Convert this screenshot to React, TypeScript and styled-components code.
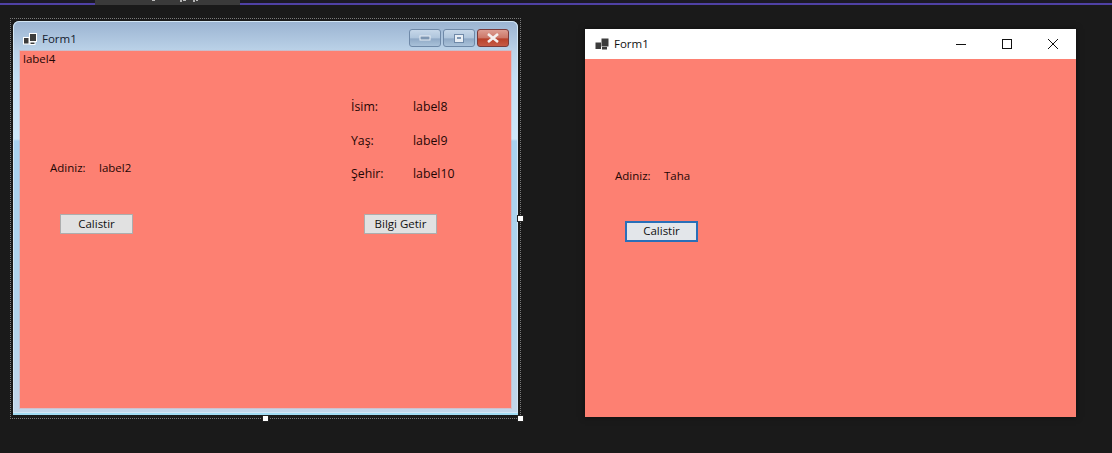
import React from 'react';
import styled, {createGlobalStyle} from 'styled-components';

const GlobalStyle = createGlobalStyle`
  html, body {
    margin: 0;
    padding: 0;
    background: #1a1a1a;
    overflow: hidden;
  }
`

const FormIcon = ({dark}: {dark?: boolean}) => {
    const edge = dark ? 'none' : '#fff';
    return (
        <svg width="14" height="12" viewBox="0 0 14 12">
            <rect x="0.5" y="4.5" width="5.5" height="6.5" fill="#3c3c3c" stroke={edge}/>
            <rect x="6.5" y="0.5" width="7" height="8" fill="#3c3c3c" stroke={edge}/>
            <rect x="7" y="9" width="5" height="2.5" fill="#3c3c3c" stroke={edge}/>
        </svg>
    );
};

const App = () => {
    return (
        <Desktop>
            <GlobalStyle/>
            <TopBar>
                <TopTab>
                    <svg width="145" height="2" viewBox="0 0 145 2">
                        <path d="M57 0 H60 M86 0 V2 M88 0 H91 M99 0 V2 M101 0 H103" stroke="#e8e8e8" strokeWidth="1.4"/>
                    </svg>
                </TopTab>
            </TopBar>

            <Windows>
                <SelectionFrame>
                    <AeroWindow>
                        <AeroTitle>
                            <FormIcon/>
                            <TitleText>Form1</TitleText>
                            <AeroButtons>
                                <AeroButton>
                                    <svg width="12" height="6" viewBox="0 0 12 6">
                                        <rect x="1" y="1" width="10" height="4" fill="#7f97b3" stroke="#e8eef5"/>
                                    </svg>
                                </AeroButton>
                                <AeroButton>
                                    <svg width="10" height="9" viewBox="0 0 10 9">
                                        <rect x="0.5" y="0.5" width="9" height="8" fill="#e8eef5" stroke="#6f89a8"/>
                                        <rect x="3" y="3" width="4" height="2" fill="#7f97b3"/>
                                    </svg>
                                </AeroButton>
                                <AeroClose>
                                    <svg width="14" height="10" viewBox="0 0 14 10">
                                        <path d="M2 1 L12 9 M12 1 L2 9" stroke="#f4efee" strokeWidth="2.6"/>
                                    </svg>
                                </AeroClose>
                            </AeroButtons>
                        </AeroTitle>
                        <DesignerBody>
                            <LeftPane>
                                <Label>label4</Label>
                                <NameBlock $inset={27} $top={93} $gap={38}>
                                    <NameRow>
                                        <NameCaption>Adiniz:</NameCaption>
                                        <Label>label2</Label>
                                    </NameRow>
                                    <FormButton>Calistir</FormButton>
                                </NameBlock>
                            </LeftPane>
                            <InfoPane>
                                <InfoGrid>
                                    <InfoLabel>İsim:</InfoLabel>
                                    <InfoLabel>label8</InfoLabel>
                                    <InfoLabel>Yaş:</InfoLabel>
                                    <InfoLabel>label9</InfoLabel>
                                    <InfoLabel>Şehir:</InfoLabel>
                                    <InfoLabel>label10</InfoLabel>
                                </InfoGrid>
                                <InfoButton>Bilgi Getir</InfoButton>
                            </InfoPane>
                        </DesignerBody>
                    </AeroWindow>
                    <Handle $x={506} $y={196}/>
                    <Handle $x={251} $y={396}/>
                    <Handle $x={506} $y={396}/>
                </SelectionFrame>

                <FlatWindow>
                    <FlatTitle>
                        <FormIcon dark/>
                        <TitleText>Form1</TitleText>
                        <FlatButtons>
                            <FlatButton>
                                <svg width="10" height="10" viewBox="0 0 10 10">
                                    <path d="M0 5.5 H10" stroke="#111" strokeWidth="1"/>
                                </svg>
                            </FlatButton>
                            <FlatButton>
                                <svg width="10" height="10" viewBox="0 0 10 10">
                                    <rect x="0.5" y="0.5" width="9" height="9" fill="none" stroke="#111"/>
                                </svg>
                            </FlatButton>
                            <FlatButton>
                                <svg width="10" height="10" viewBox="0 0 10 10">
                                    <path d="M0 0 L10 10 M10 0 L0 10" stroke="#111" strokeWidth="1"/>
                                </svg>
                            </FlatButton>
                        </FlatButtons>
                    </FlatTitle>
                    <RunBody>
                        <NameBlock $inset={30} $top={109} $gap={37}>
                            <NameRow>
                                <NameCaption>Adiniz:</NameCaption>
                                <Label>Taha</Label>
                            </NameRow>
                            <FormButton $focused>Calistir</FormButton>
                        </NameBlock>
                    </RunBody>
                </FlatWindow>
            </Windows>
        </Desktop>
    );
};

export default App;

const Desktop = styled.div`
  width: 1112px;
  height: 453px;
  background: #1a1a1a;
  overflow: hidden;
  font-family: "Open Sans", "Noto Sans", sans-serif;
  font-size: 11.5px;
`

const TopBar = styled.div`
  height: 5px;
  padding-left: 95px;
  background: linear-gradient(180deg, #1c1a26 0, #1c1a26 3px, #4f41a5 3px, #4f41a5 100%);
`

const TopTab = styled.div`
  width: 145px;
  height: 5px;
  background: #3a3a3a;

  svg {
    display: block;
  }
`

const Windows = styled.div`
  display: flex;
  align-items: flex-start;
  padding: 13px 0 0 10px;
`

const SelectionFrame = styled.div`
  position: relative;
  width: 511px;
  height: 401px;
  padding: 2px 2px 3px;
  box-sizing: border-box;
  border: 1px dotted #7a7a7a;
`

const AeroWindow = styled.div`
  display: flex;
  flex-direction: column;
  height: 100%;
  padding: 0 7px 5px;
  box-sizing: border-box;
  border-radius: 6px 6px 0 0;
  border-bottom: 2px solid #a2dcf4;
  background: linear-gradient(180deg, #9ab3d1 0, #bbd2e8 30px, #c4dff5 60px, #cde7f9 118px, #a8d1ef 120px, #b2d4ec 300px, #c3d6ea 100%);
  box-shadow: inset 0 0 0 1px #d3e6f4;
`

const AeroTitle = styled.div`
  display: flex;
  align-items: center;
  gap: 5px;
  flex: 0 0 30px;
  padding: 6px 0 0 3px;
  box-sizing: border-box;
  color: #14202e;
`

const TitleText = styled.span`
  font-size: 11.5px;
  line-height: 14px;
`

const AeroButtons = styled.div`
  display: flex;
  gap: 2px;
  margin: -2px 2px 0 auto;
`

const AeroButton = styled.div`
  display: flex;
  align-items: center;
  justify-content: center;
  width: 32px;
  height: 18px;
  box-sizing: border-box;
  border: 1px solid #6f89a8;
  border-radius: 3px;
  background: linear-gradient(180deg, #c6d7e9 0, #afc5dc 50%, #8fa9c6 55%, #a9c1d9 100%);
`

const AeroClose = styled(AeroButton)`
  border-color: #7a3a3a;
  background: linear-gradient(180deg, #dd9d92 0, #cc7667 50%, #b8402a 55%, #c65a45 100%);
`

const SalmonBody = styled.div`
  flex: 1;
  background: #fd8072;
`

const DesignerBody = styled(SalmonBody)`
  display: flex;
  justify-content: space-between;
  padding-left: 3px;
  box-shadow: 0 0 0 1px rgba(253, 128, 114, 0.25);
`

const RunBody = styled(SalmonBody)`
  display: flex;
`

const LeftPane = styled.div`
  display: flex;
  flex-direction: column;
  align-items: flex-start;
`

const Label = styled.span`
  font-size: 11.5px;
  line-height: 16px;
  color: #1f0604;
  white-space: nowrap;
`

const NameBlock = styled.div<{$inset: number; $top: number; $gap: number}>`
  display: flex;
  flex-direction: column;
  align-items: flex-start;
  gap: ${p => p.$gap}px;
  padding: ${p => p.$top}px 0 0 ${p => p.$inset}px;
`

const NameRow = styled.div`
  display: grid;
  grid-template-columns: 49px auto;
`

const NameCaption = styled(Label)``

const FormButton = styled.div<{$focused?: boolean}>`
  width: 73px;
  height: ${p => (p.$focused ? 21 : 20)}px;
  margin-left: 10px;
  padding-bottom: 2px;
  box-sizing: border-box;
  display: flex;
  align-items: center;
  justify-content: center;
  font-size: 11.5px;
  color: #111;
  background: ${p => (p.$focused ? '#e3e6ea' : '#e1e1e1')};
  border: ${p => (p.$focused ? '2px solid #2a6fb8' : '1px solid #adadad')};
`

const InfoPane = styled.div`
  display: flex;
  flex-direction: column;
  align-items: flex-start;
  width: 160px;
  padding-top: 48px;
`

const InfoGrid = styled.div`
  display: grid;
  grid-template-columns: 62px auto;
  row-gap: 17.5px;
`

const InfoLabel = styled(Label)`
  font-size: 12.3px;
`

const InfoButton = styled(FormButton)`
  margin: 32px 0 0 13px;
`

const Handle = styled.div<{$x: number; $y: number}>`
  position: absolute;
  left: ${p => p.$x}px;
  top: ${p => p.$y}px;
  width: 5px;
  height: 5px;
  background: #fff;
  border: 1px solid #222;
`

const FlatWindow = styled.div`
  display: flex;
  flex-direction: column;
  width: 491px;
  height: 388px;
  margin: 11px 0 0 64px;
  box-shadow: 0 0 6px rgba(0, 0, 0, 0.5);
`

const FlatTitle = styled.div`
  display: flex;
  align-items: center;
  gap: 5px;
  flex: 0 0 30px;
  padding: 0 0 1px 10px;
  box-sizing: border-box;
  background: #fff;
  color: #111;
`

const FlatButtons = styled.div`
  display: flex;
  margin-left: auto;
  height: 100%;
`

const FlatButton = styled.div`
  display: flex;
  align-items: center;
  justify-content: center;
  width: 46px;
  height: 100%;
`
